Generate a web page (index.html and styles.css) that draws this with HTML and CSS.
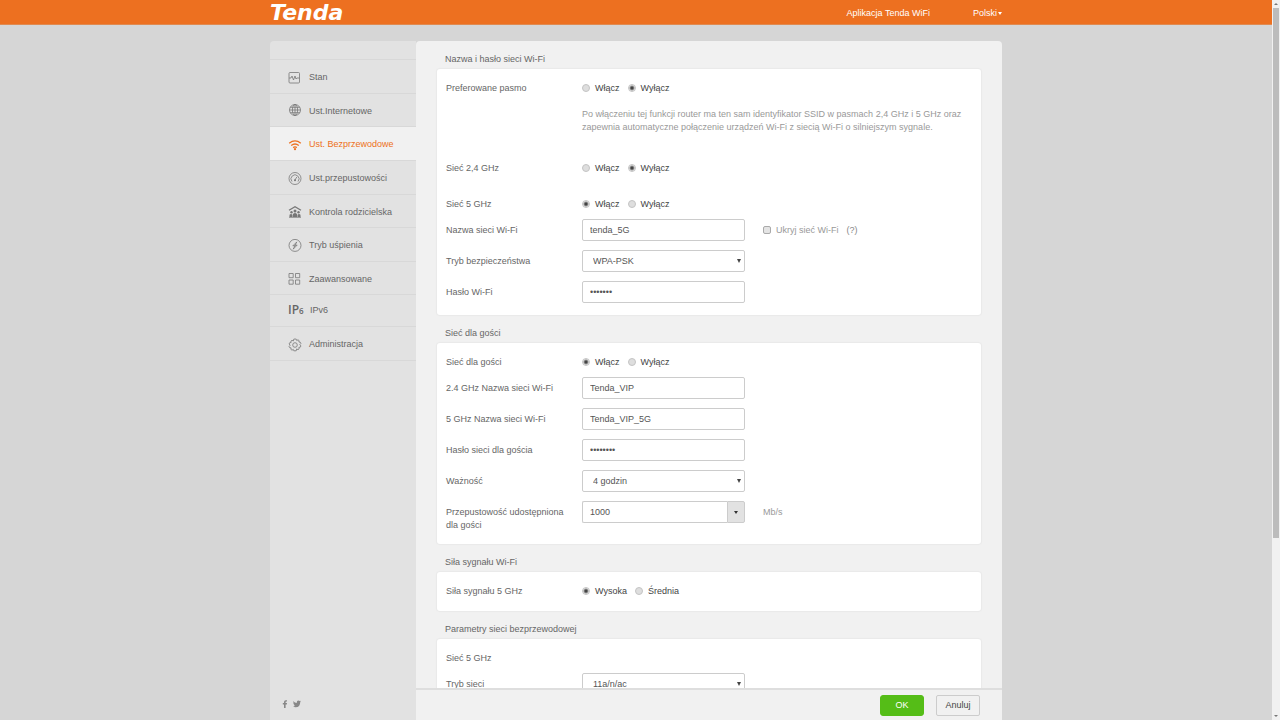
FILE: index.html
```
<!DOCTYPE html>
<html lang="pl">
<head>
<meta charset="utf-8">
<title>Tenda - Ust. Bezprzewodowe</title>
<link rel="stylesheet" href="styles.css">
</head>
<body>
<div class="page">
  <header class="header">
    <div class="header-inner">
      <a class="logo" href="#">Tenda</a>
      <nav class="header-nav">
        <a class="header-link" href="#">Aplikacja Tenda WiFi</a>
        <button class="language" type="button">Polski<span class="caret"></span></button>
      </nav>
    </div>
  </header>
  <div class="layout">
    <aside class="sidebar">
      <nav class="menu">
        <a class="menu-item" href="#"><svg class="icon" viewBox="0 0 14 14"><rect x="1" y="1.500" width="10.500" height="10.500" rx="1"/><path d="M1 7h2l1-2 1.500 4 1.500-4 1 3 .8-1h2.700"/></svg>Stan</a>
        <a class="menu-item" href="#"><svg class="icon" viewBox="0 0 14 14"><circle cx="7" cy="6" r="5.500"/><ellipse cx="7" cy="6" rx="2.600" ry="5.500"/><path d="M7 .5v11M1.500 6h11M2.200 3.300h9.600M2.200 8.700h9.600"/></svg>Ust.Internetowe</a>
        <a class="menu-item active" href="#"><svg class="icon" viewBox="0 0 14 14"><path class="thick" d="M1.200 5.200q5.800-4.600 11.600 0M3.200 7.500q3.800-3 7.600 0M5.200 9.600q1.800-1.300 3.600 0"/><circle class="solid" cx="7" cy="11.200" r="1.100"/></svg>Ust. Bezprzewodowe</a>
        <a class="menu-item" href="#"><svg class="icon" viewBox="0 0 14 14"><circle cx="7" cy="6.500" r="6"/><path d="M4 9.500a4 4 0 1 1 6 0M7 8l1.800-3"/><circle class="solid" cx="7" cy="8.300" r="1"/></svg>Ust.przepustowości</a>
        <a class="menu-item" href="#"><svg class="icon" viewBox="0 0 14 14"><path class="thick" d="M1 5.200L7 1.800l6 3.400"/><g class="solid"><circle cx="7" cy="6" r="1.500"/><circle cx="3.500" cy="7.300" r="1.200"/><circle cx="10.500" cy="7.300" r="1.200"/><path d="M5 12V9q2-1.800 4 0v3zM1.500 12v-2.200q1.500-1.600 3 0V12zM9.500 12V9.800q1.500-1.600 3 0V12z"/></g><path d="M1 12.300h12"/></svg>Kontrola rodzicielska</a>
        <a class="menu-item" href="#"><svg class="icon" viewBox="0 0 14 14"><circle cx="7" cy="6.400" r="6"/><path d="M8.800 2.900L4.800 6.900 7 6.600 5.200 10.200l4-4.200-2.200.4z"/></svg>Tryb uśpienia</a>
        <a class="menu-item" href="#"><svg class="icon" viewBox="0 0 14 14"><path d="M1 1.500h4.200v4.200H1zM7.500 1.500h4.200v4.200H7.500zM1 8h4.200v4.200H1zM7.500 8h4.200v4.200H7.500z"/></svg>Zaawansowane</a>
        <a class="menu-item ipv6" href="#"><span class="ip-icon">IP<small>6</small></span>IPv6</a>
        <a class="menu-item" href="#"><svg class="icon" viewBox="0 0 14 14"><path d="M7 1l1.200.1.500 1.400 1.300-.7 1.100.8-.2 1.400 1.500.3.500 1.200-1.100 1.200 1.100 1.200-.5 1.200-1.500.3.200 1.500-1.100.8-1.300-.8L8.200 12.800H5.800L5.300 11.400 4 12.200l-1.100-.8.2-1.500-1.500-.3-.5-1.200 1.100-1.200L1.100 6l.5-1.200 1.500-.3-.2-1.400L4 2.300l1.300.7L5.800 1.100z"/><circle cx="7" cy="7" r="2.300"/></svg>Administracja</a>
      </nav>
      <div class="social">
        <a href="#" aria-label="Facebook"><svg viewBox="0 0 8 8"><path d="M3 8V4.500H1.800V3H3V2Q3 .2 4.800.2H6v1.400h-.8q-.6 0-.6.600V3H6L5.800 4.500H4.600V8z"/></svg></a>
        <a href="#" aria-label="Twitter"><svg viewBox="0 0 8 8"><path d="M.3 1.200q1.500 1.600 3.500 1.700Q3.600.7 5.400.6q.8 0 1.200.5L7.600.7 7.100 1.600 8 1.400 7.200 2.300Q7.200 7.200 2.600 7.300 1.100 7.300 0 6.500q1.200.1 2.200-.7Q1.100 5.700.8 4.700h.7Q.3 4.200.3 3l.7.200Q-.2 2.400.3 1.200z"/></svg></a>
      </div>
    </aside>
    <form class="panel">
      <div class="scroll">
        <h2 class="title">Nazwa i hasło sieci Wi-Fi</h2>
        <section class="card">
          <div class="row choice"><span class="label">Preferowane pasmo</span>
            <label class="radio"><input type="radio" name="band">Włącz</label><label class="radio"><input type="radio" name="band" checked>Wyłącz</label></div>
          <p class="hint">Po włączeniu tej funkcji router ma ten sam identyfikator SSID w pasmach 2,4 GHz i 5 GHz oraz zapewnia automatyczne połączenie urządzeń Wi-Fi z siecią Wi-Fi o silniejszym sygnale.</p>
          <div class="row choice spaced"><span class="label">Sieć 2,4 GHz</span>
            <label class="radio"><input type="radio" name="net24">Włącz</label><label class="radio"><input type="radio" name="net24" checked>Wyłącz</label></div>
          <div class="row choice"><span class="label">Sieć 5 GHz</span>
            <label class="radio"><input type="radio" name="net5" checked>Włącz</label><label class="radio"><input type="radio" name="net5">Wyłącz</label></div>
          <div class="row"><label class="label" for="ssid">Nazwa sieci Wi-Fi</label>
            <input class="field" id="ssid" type="text" value="tenda_5G">
            <label class="aside check"><input type="checkbox">Ukryj sieć Wi-Fi</label><span class="help">(?)</span></div>
          <div class="row"><label class="label" for="security">Tryb bezpieczeństwa</label>
            <span class="select"><select class="field" id="security"><option>WPA-PSK</option></select></span></div>
          <div class="row"><label class="label" for="pass">Hasło Wi-Fi</label>
            <input class="field" id="pass" type="password" value="1234567"></div>
        </section>

        <h2 class="title">Sieć dla gości</h2>
        <section class="card">
          <div class="row choice"><span class="label">Sieć dla gości</span>
            <label class="radio"><input type="radio" name="guest" checked>Włącz</label><label class="radio"><input type="radio" name="guest">Wyłącz</label></div>
          <div class="row"><label class="label" for="g24">2.4 GHz Nazwa sieci Wi-Fi</label>
            <input class="field" id="g24" type="text" value="Tenda_VIP"></div>
          <div class="row"><label class="label" for="g5">5 GHz Nazwa sieci Wi-Fi</label>
            <input class="field" id="g5" type="text" value="Tenda_VIP_5G"></div>
          <div class="row"><label class="label" for="gpass">Hasło sieci dla gościa</label>
            <input class="field" id="gpass" type="password" value="12345678"></div>
          <div class="row"><label class="label" for="validity">Ważność</label>
            <span class="select"><select class="field" id="validity"><option>4 godzin</option></select></span></div>
          <div class="row"><label class="label" for="bandwidth">Przepustowość udostępniona dla gości</label>
            <span class="combo"><input class="field" id="bandwidth" type="text" value="1000"><button type="button" aria-label="Wybierz"><span class="caret"></span></button></span>
            <span class="aside">Mb/s</span></div>
        </section>

        <h2 class="title">Siła sygnału Wi-Fi</h2>
        <section class="card compact">
          <div class="row choice"><span class="label">Siła sygnału 5 GHz</span>
            <label class="radio"><input type="radio" name="power" checked>Wysoka</label><label class="radio"><input type="radio" name="power">Średnia</label></div>
        </section>

        <h2 class="title">Parametry sieci bezprzewodowej</h2>
        <section class="card">
          <div class="row choice"><span class="label">Sieć 5 GHz</span></div>
          <div class="row"><label class="label" for="mode">Tryb sieci</label>
            <span class="select"><select class="field" id="mode"><option>11a/n/ac</option></select></span></div>
        </section>
      </div>
      <footer class="actions">
        <button class="btn primary" type="button">OK</button>
        <button class="btn" type="button">Anuluj</button>
      </footer>
    </form>
  </div>
</div>
<div class="scrollbar"><span class="arrow up"></span><span class="thumb"></span><span class="arrow down"></span></div>
</body>
</html>
```
FILE: styles.css
```
* { box-sizing: border-box; }
body {
  margin: 0;
  display: flex;
  height: 100vh;
  overflow: hidden;
  background: #d6d6d6;
  color: #666;
  font: 9px/13px "Liberation Sans", Arial, sans-serif;
}
a { color: inherit; text-decoration: none; }
button, input, select { font: inherit; color: inherit; margin: 0; }
.page { flex: 1; display: flex; flex-direction: column; min-width: 0; }

.header { background: #ed7020; color: #fff; border-bottom: 1px solid #e08a50; }
.header-inner {
  max-width: 732px;
  height: 24px;
  margin: 0 auto;
  display: flex;
  align-items: center;
  justify-content: space-between;
}
.logo { padding-top: 1px; font: italic bold 22px/24px "DejaVu Sans", sans-serif; }
.header-nav { display: flex; align-items: center; gap: 43px; padding-top: 2px; }
.language {
  display: flex;
  align-items: center;
  gap: 1px;
  padding: 0;
  border: 0;
  background: none;
  color: #fff;
}
.caret {
  border: 2px solid transparent;
  border-top: 3px solid currentColor;
  border-bottom: 0;
}

.layout {
  flex: 1;
  min-height: 0;
  width: 100%;
  max-width: 732px;
  margin: 16px auto 0;
  display: flex;
}
.sidebar {
  width: 146px;
  display: flex;
  flex-direction: column;
  justify-content: space-between;
  background: #e2e2e2;
  border-radius: 4px 0 0 0;
}
.menu { margin-top: 18px; border-top: 1px solid #d8d8d8; }
.menu-item {
  display: flex;
  align-items: center;
  gap: 7px;
  height: 34px;
  padding: 2px 0 0 18px;
  border-bottom: 1px solid #d8d8d8;
}
.menu-item:nth-child(2),
.menu-item:nth-child(5),
.menu-item:nth-child(7) { height: 33px; }
.menu-item.ipv6 { height: 32px; padding-top: 0; }
.menu-item.active { background: #f1f1f1; color: #ed7020; }
.icon {
  width: 14px;
  height: 14px;
  fill: none;
  stroke: #777;
  stroke-width: 0.8;
}
.icon .thick { stroke-width: 1.3; }
.icon .solid { fill: #777; stroke: none; }
.active .icon { stroke: #ed7020; }
.active .icon .solid { fill: #ed7020; }
.ip-icon { width: 15px; font: 600 12px/14px "Open Sans", sans-serif; white-space: nowrap; }
.ip-icon small { font-size: 8px; }
.social { display: flex; gap: 4px; padding: 0 0 12px 11px; }
.social svg { display: block; width: 8px; height: 8px; fill: #888; }

.panel {
  flex: 1;
  min-width: 0;
  display: flex;
  flex-direction: column;
  background: #f1f1f1;
  border-radius: 4px 4px 0 0;
}
.scroll { flex: 1; min-height: 0; overflow: hidden; padding: 0 21px; }
.title {
  height: 28px;
  margin: 0;
  padding: 12px 0 0 8px;
  font-size: 9px;
  font-weight: normal;
}
.card {
  padding: 8px 9px 3px;
  border-radius: 3px;
  background: #fff;
  box-shadow: 0 0 1px 1px #e9e9e9;
}
.card.compact { padding-bottom: 5px; }
.row { display: flex; align-items: flex-start; min-height: 22px; margin-bottom: 9px; }
.row.choice { margin-bottom: 4px; }
.row.spaced { margin-bottom: 14px; }
.label { width: 136px; padding: 5px 16px 0 0; flex: none; }
.radio { display: flex; align-items: center; height: 22px; margin-right: 8px; color: #444; }
.radio input {
  appearance: none;
  width: 8px;
  height: 8px;
  margin-right: 5px;
  border: 1px solid #c4c4c4;
  border-radius: 50%;
  background: #dedede;
}
.radio input:checked { background: radial-gradient(circle, #444 0 1px, #e8e8e8 3px); }
.hint { margin: 9px 0 23px 136px; max-width: 380px; color: #999; }
.field {
  width: 163px;
  height: 22px;
  padding: 0 7px;
  border: 1px solid #ccc;
  border-radius: 2px;
  background: #fff;
  color: #555;
}
.select { position: relative; }
.select .field { display: block; appearance: none; padding-left: 10px; }
.select::after {
  content: "";
  position: absolute;
  right: 4px;
  top: 9px;
  border: 2px solid transparent;
  border-top: 4px solid #444;
  border-bottom: 0;
}
.combo { display: flex; width: 163px; }
.combo .field { flex: 1; min-width: 0; border-radius: 2px 0 0 2px; border-right: 0; }
.combo button {
  width: 18px;
  display: flex;
  align-items: center;
  justify-content: center;
  padding: 0;
  border: 1px solid #ccc;
  border-radius: 0 2px 2px 0;
  background: #e2e2e2;
  color: #333;
}
.aside { display: flex; align-items: center; height: 22px; margin-left: 18px; color: #999; }
.check input {
  appearance: none;
  width: 8px;
  height: 8px;
  margin-right: 5px;
  border: 1px solid #aaa;
  border-radius: 2px;
  background: #e4e4e4;
}
.help { margin-left: 8px; line-height: 22px; color: #888; }
.actions {
  display: flex;
  justify-content: flex-end;
  gap: 12px;
  height: 32px;
  padding: 5px 22px 0 0;
  border-top: 2px solid #dedede;
}
.btn {
  width: 44px;
  height: 21px;
  padding: 0;
  border: 1px solid #ccc;
  border-radius: 2px;
  background: #f1f1f1;
  color: #444;
}
.btn.primary { border-color: #55bd17; background: #55bd17; color: #fff; border-radius: 3px; }

.scrollbar {
  width: 8px;
  display: flex;
  flex-direction: column;
  align-items: center;
  background: #f1f1f1;
}
.thumb { width: 6px; height: 530px; background: #bcbcbc; }
.arrow { height: 8px; display: flex; align-items: center; }
.arrow::before { content: ""; border: 2px solid transparent; }
.arrow.up::before { border-top: 0; border-bottom-color: #777; }
.arrow.down { margin-top: auto; }
.arrow.down::before { border-bottom: 0; border-top-color: #777; }
```
